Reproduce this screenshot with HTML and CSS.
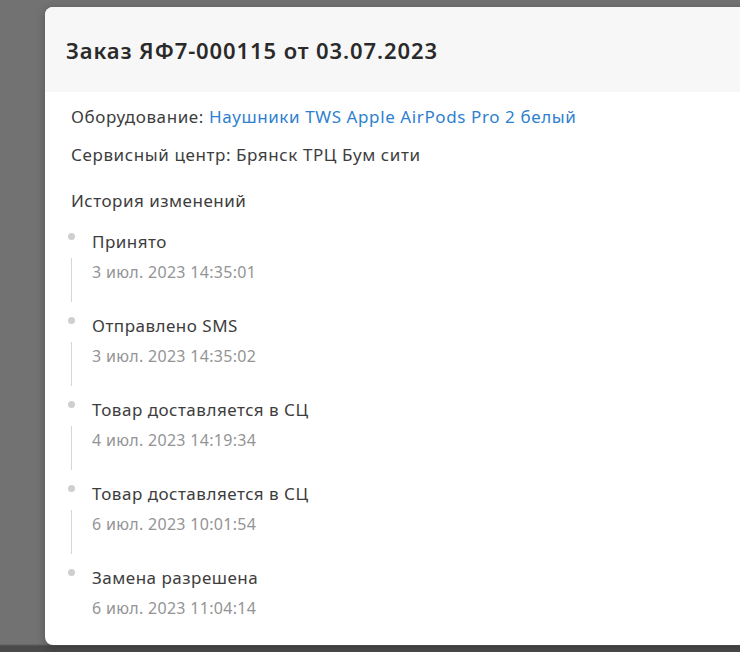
FILE: index.html
```html
<!DOCTYPE html>
<html lang="ru">
<head>
    <meta charset="UTF-8">
    <meta name="viewport" content="width=device-width, initial-scale=1.0">
    <title>Заказ ЯФ7-000115</title>
    <link rel="stylesheet" href="styles.css">
</head>
<body>
    <div class="modal">
        <div class="modal-header">
            <h2>Заказ ЯФ7-000115 от 03.07.2023</h2>
        </div>

        <div class="modal-body">
            <p class="info">Оборудование: <a href="#">Наушники TWS Apple AirPods Pro 2 белый</a></p>
            <p class="info">Сервисный центр: Брянск ТРЦ Бум сити</p>

            <h3 class="history-title">История изменений</h3>

            <ul class="timeline">
                <li class="timeline-item">
                    <div class="status">Принято</div>
                    <div class="date">3 июл. 2023 14:35:01</div>
                </li>
                <li class="timeline-item">
                    <div class="status">Отправлено SMS</div>
                    <div class="date">3 июл. 2023 14:35:02</div>
                </li>
                <li class="timeline-item">
                    <div class="status">Товар доставляется в СЦ</div>
                    <div class="date">4 июл. 2023 14:19:34</div>
                </li>
                <li class="timeline-item">
                    <div class="status">Товар доставляется в СЦ</div>
                    <div class="date">6 июл. 2023 10:01:54</div>
                </li>
                <li class="timeline-item">
                    <div class="status">Замена разрешена</div>
                    <div class="date">6 июл. 2023 11:04:14</div>
                </li>
            </ul>
        </div>
    </div>
</body>
</html>
```

FILE: styles.css
```css
:root {
    --backdrop: #727272;
    --header-bg: #f7f7f7;
    --text: #3d3d3d;
    --muted: #949494;
    --link: #2f7fcf;
    --line: #d6d6d6;
    --dot: #cfcfcf;
}

* {
    margin: 0;
    padding: 0;
    box-sizing: border-box;
    font-family: 'Noto Sans', 'Open Sans', sans-serif;
}

body {
    background: linear-gradient(to bottom, var(--backdrop) 0, var(--backdrop) 644px, #4a4a4a 646px);
    height: 652px;
    overflow: hidden;
    padding: 7px 0 0 45px;
}

.modal {
    width: 720px;
    height: 638px;
    background: white;
    border-radius: 8px;
    overflow: hidden;
    box-shadow: 0 2px 8px rgba(0, 0, 0, 0.25);
}

.modal-header {
    background-color: var(--header-bg);
    height: 85px;
    display: flex;
    align-items: center;
    padding-left: 21px;
}

.modal-header h2 {
    font-size: 22px;
    font-weight: 600;
    color: #2a2a2a;
    letter-spacing: 0.9px;
}

.modal-body {
    padding: 14px 26px;
}

.info {
    font-size: 17px;
    color: var(--text);
    line-height: 22px;
    margin-bottom: 16px;
    letter-spacing: 0.6px;
}

.info a {
    color: var(--link);
    text-decoration: none;
}

.history-title {
    font-size: 17px;
    font-weight: 400;
    color: var(--text);
    line-height: 22px;
    letter-spacing: 0.5px;
    margin-top: 24px;
    margin-bottom: 19px;
}

.timeline {
    list-style: none;
}

.timeline-item {
    position: relative;
    padding-left: 21px;
    height: 84px;
}

.timeline-item:last-child {
    height: auto;
}

.timeline-item::before {
    content: '';
    position: absolute;
    left: -3px;
    top: 2px;
    width: 7px;
    height: 7px;
    border-radius: 50%;
    background: var(--dot);
}

.timeline-item::after {
    content: '';
    position: absolute;
    left: 0;
    top: 27px;
    width: 1px;
    height: 44px;
    background: var(--line);
}

.timeline-item:last-child::after {
    display: none;
}

.status {
    font-size: 17px;
    color: var(--text);
    line-height: 22px;
    letter-spacing: 0.5px;
}

.date {
    font-size: 16px;
    color: var(--muted);
    line-height: 20px;
    margin-top: 9px;
    letter-spacing: 0.3px;
}
```
